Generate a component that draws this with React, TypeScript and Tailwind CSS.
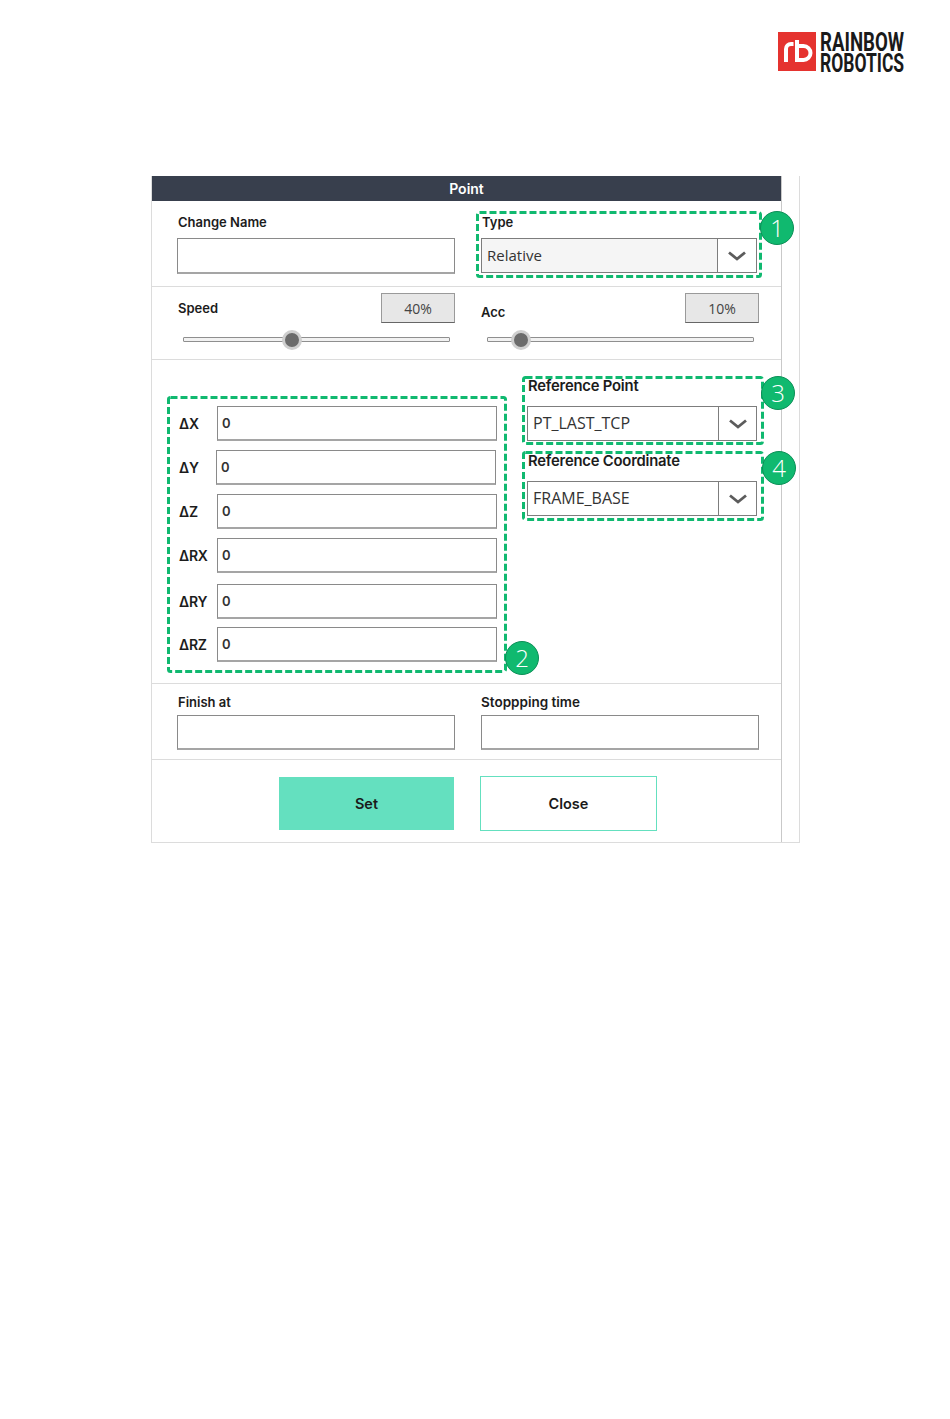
import React from "react";

const GREEN = "#10b970";

function Dashed({ w, h }: { w: number; h: number }) {
  return (
    <svg className="absolute left-0 top-0 pointer-events-none" width={w} height={h} viewBox={`0 0 ${w} ${h}`} fill="none">
      <rect x="1.5" y="1.5" width={w - 3} height={h - 3} rx="2" stroke={GREEN} strokeWidth="3" strokeDasharray="7 3" />
    </svg>
  );
}

function Badge({ n, className }: { n: string; className: string }) {
  return (
    <div className={`absolute w-[34px] h-[34px] rounded-full bg-[#10b96f] border border-[#0c8f57] text-white flex items-center justify-center font-['Open_Sans',sans-serif] font-light text-[24px] leading-none ${className}`}>
      {n}
    </div>
  );
}

function Label({ children, className = "" }: { children: React.ReactNode; className?: string }) {
  return <div className={`font-['Inter',sans-serif] font-semibold leading-[16px] text-[#1c1c1c] ${className}`}>{children}</div>;
}

function Select({ value, className = "", fill = "bg-white", text = "text-[15px]", arrow = "w-[39px]" }: { value: string; className?: string; fill?: string; text?: string; arrow?: string }) {
  return (
    <div className={`flex h-[35px] border border-[#7d7d7d] ${className}`}>
      <div className={`flex-1 flex items-center pl-[5px] pb-[1px] font-['Open_Sans',sans-serif] text-[#333] ${text} ${fill}`}>{value}</div>
      <div className={`${arrow} border-l border-[#7d7d7d] bg-white flex items-center justify-center`}>
        <svg width="20" height="10" viewBox="0 0 20 10" fill="none">
          <path d="M2 1.5 L10 8 L18 1.5" stroke="#5c5c5c" strokeWidth="2.8" />
        </svg>
      </div>
    </div>
  );
}

function Field({ className = "" }: { className?: string }) {
  return <div className={`h-[35px] border border-[#8a8a8a] border-b-2 border-b-[#a5a5a5] bg-white ${className}`} />;
}

function Slider({ pos }: { pos: number }) {
  return (
    <div className="relative h-[5px] bg-[#f2f2f2] border border-[#8f8f8f] rounded-[1px]">
      <div className="absolute top-1/2 w-[20px] h-[20px] -translate-x-1/2 -translate-y-1/2 rounded-full bg-[#6b6b6b] border-[3px] border-[#cfcfcf]" style={{ left: pos }} />
    </div>
  );
}

function Pct({ v }: { v: string }) {
  return (
    <div className="w-[74px] h-[30px] bg-[#e7e7e7] border border-[#9a9a9a] border-b-[#666] flex items-center justify-center font-['Open_Sans',sans-serif] text-[14px] text-[#444]">
      {v}
    </div>
  );
}

const rows: [string, number, string][] = [
  ["ΔX", 0, "ml-[1px]"],
  ["ΔY", 9, ""],
  ["ΔZ", 9, "ml-[1px]"],
  ["ΔRX", 9, "ml-[1px]"],
  ["ΔRY", 11, "ml-[1px]"],
  ["ΔRZ", 8, "ml-[1px]"],
];

export default function App() {
  return (
    <div className="bg-white min-h-[1419px] w-[950px] overflow-hidden">
      <div className="flex justify-end pt-[32px] pr-[46px] h-[176px]">
        <div className="flex gap-[4px] h-[40px]">
          <svg width="38" height="39" viewBox="0 0 38 39" fill="none">
            <rect width="38" height="39" fill="#e5332f" />
            <path d="M8 30 V17 a5 5 0 0 1 5 -5 h2.5" stroke="white" strokeWidth="4" />
            <path d="M19 8 V28 H25.5 a7 7 0 0 0 0 -14 H19" stroke="white" strokeWidth="4" />
          </svg>
          <div className="w-[84px] h-[42px] font-['Roboto',sans-serif] font-bold text-[25px] text-[#1a1a1a]">
            <div className="h-[21px] leading-[21px] origin-top-left scale-x-[0.745] whitespace-nowrap">RAINBOW</div>
            <div className="h-[21px] leading-[21px] origin-top-left scale-x-[0.7] whitespace-nowrap">ROBOTICS</div>
          </div>
        </div>
      </div>

      <div className="ml-[151px] w-[649px] h-[667px] border border-[#dcdcdc] border-t-0 bg-white">
        <div className="w-[630px] h-full border-r border-[#c9c9c9]">
          <div className="h-[25px] bg-[#383f4d] text-white flex items-center justify-center font-['Inter',sans-serif] font-semibold text-[14px]">
            Point
          </div>

          {/* Name / type */}
          <div className="h-[86px] border-b border-[#dcdcdc] flex">
            <div className="ml-[25px] w-[278px] pt-[13px]">
              <Label className="text-[13px] ml-[1px]">Change Name</Label>
              <Field className="mt-[8px] h-[36px]" />
            </div>
            <div className="relative ml-[21px] mt-[10px] w-[286px] h-[67px] pl-[5px] pt-[3px]">
              <Dashed w={286} h={67} />
              <Label className="text-[13px] ml-[1px]">Type</Label>
              <Select value="Relative" fill="bg-[#f5f5f5]" arrow="w-[39px]" className="mt-[8px] w-[276px]" />
              <Badge n="1" className="left-[284px] top-0" />
            </div>
          </div>

          {/* Speed / Acc */}
          <div className="h-[73px] border-b border-[#dcdcdc] flex">
            <div className="ml-[25px] w-[278px] pt-[6px]">
              <div className="flex justify-between items-start">
                <Label className="text-[13px] mt-[7px] ml-[1px]">Speed</Label>
                <Pct v="40%" />
              </div>
              <div className="ml-[6px] mr-[5px] mt-[14px]">
                <Slider pos={108} />
              </div>
            </div>
            <div className="ml-[26px] w-[278px] pt-[6px]">
              <div className="flex justify-between items-start">
                <Label className="text-[13px] mt-[11px]">Acc</Label>
                <Pct v="10%" />
              </div>
              <div className="ml-[6px] mr-[5px] mt-[14px]">
                <Slider pos={33} />
              </div>
            </div>
          </div>

          {/* Deltas / references */}
          <div className="h-[324px] border-b border-[#dcdcdc] flex items-start">
            <div className="relative ml-[15px] mt-[36px] w-[340px] h-[277px] pt-[10px] pl-[12px]">
              <Dashed w={340} h={277} />
              {rows.map(([label, mt, offset]) => (
                <div key={label} className="flex items-center" style={{ marginTop: mt }}>
                  <div className="w-[37px] font-['Inter',sans-serif] font-semibold text-[14px] text-[#1c1c1c] tracking-[-0.2px]">{label}</div>
                  <div className={`w-[280px] h-[35px] flex items-center pl-[4px] pt-[2px] border border-[#8a8a8a] border-b-2 border-b-[#a5a5a5] bg-white font-['Inter',sans-serif] font-semibold text-[13px] text-[#333] ${offset}`}>0</div>
                </div>
              ))}
              <Badge n="2" className="left-[338px] top-[245px]" />
            </div>
            <div className="ml-[15px] mt-[16px] w-[242px] flex flex-col gap-[6px]">
              <div className="relative h-[69px] pl-[5px] pt-[2px]">
                <Dashed w={242} h={69} />
                <Label className="ml-[1px] text-[14.8px] tracking-[-0.2px]">Reference Point</Label>
                <Select value="PT_LAST_TCP" text="text-[16px]" arrow="w-[38px]" className="mt-[12px] w-[230px]" />
                <Badge n="3" className="left-[239px] top-0" />
              </div>
              <div className="relative h-[70px] pl-[5px] pt-[2px]">
                <Dashed w={242} h={70} />
                <Label className="ml-[1px] text-[14.8px] tracking-[-0.2px]">Reference Coordinate</Label>
                <Select value="FRAME_BASE" text="text-[16px]" arrow="w-[38px]" className="mt-[12px] w-[230px]" />
                <Badge n="4" className="left-[240px] top-0" />
              </div>
            </div>
          </div>

          {/* Finish / stop */}
          <div className="h-[76px] border-b border-[#dcdcdc] flex gap-[26px] pl-[25px] pt-[10px]">
            <div className="w-[278px]">
              <Label className="text-[13px] ml-[1px]">Finish at</Label>
              <Field className="mt-[5px]" />
            </div>
            <div className="w-[278px]">
              <Label className="text-[13.5px]">Stoppping time</Label>
              <Field className="mt-[5px]" />
            </div>
          </div>

          {/* Actions */}
          <div className="flex items-start pl-[127px] pt-[16px]">
            <div className="mt-[1px] w-[175px] h-[53px] bg-[#64e0bf] flex items-center justify-center font-['Inter',sans-serif] font-semibold text-[14.5px] text-[#1a1a1a]">Set</div>
            <div className="ml-[26px] w-[177px] h-[55px] border border-[#64e0bf] bg-white flex items-center justify-center font-['Inter',sans-serif] font-semibold text-[14.5px] text-[#1a1a1a]">Close</div>
          </div>
        </div>
      </div>
    </div>
  );
}
